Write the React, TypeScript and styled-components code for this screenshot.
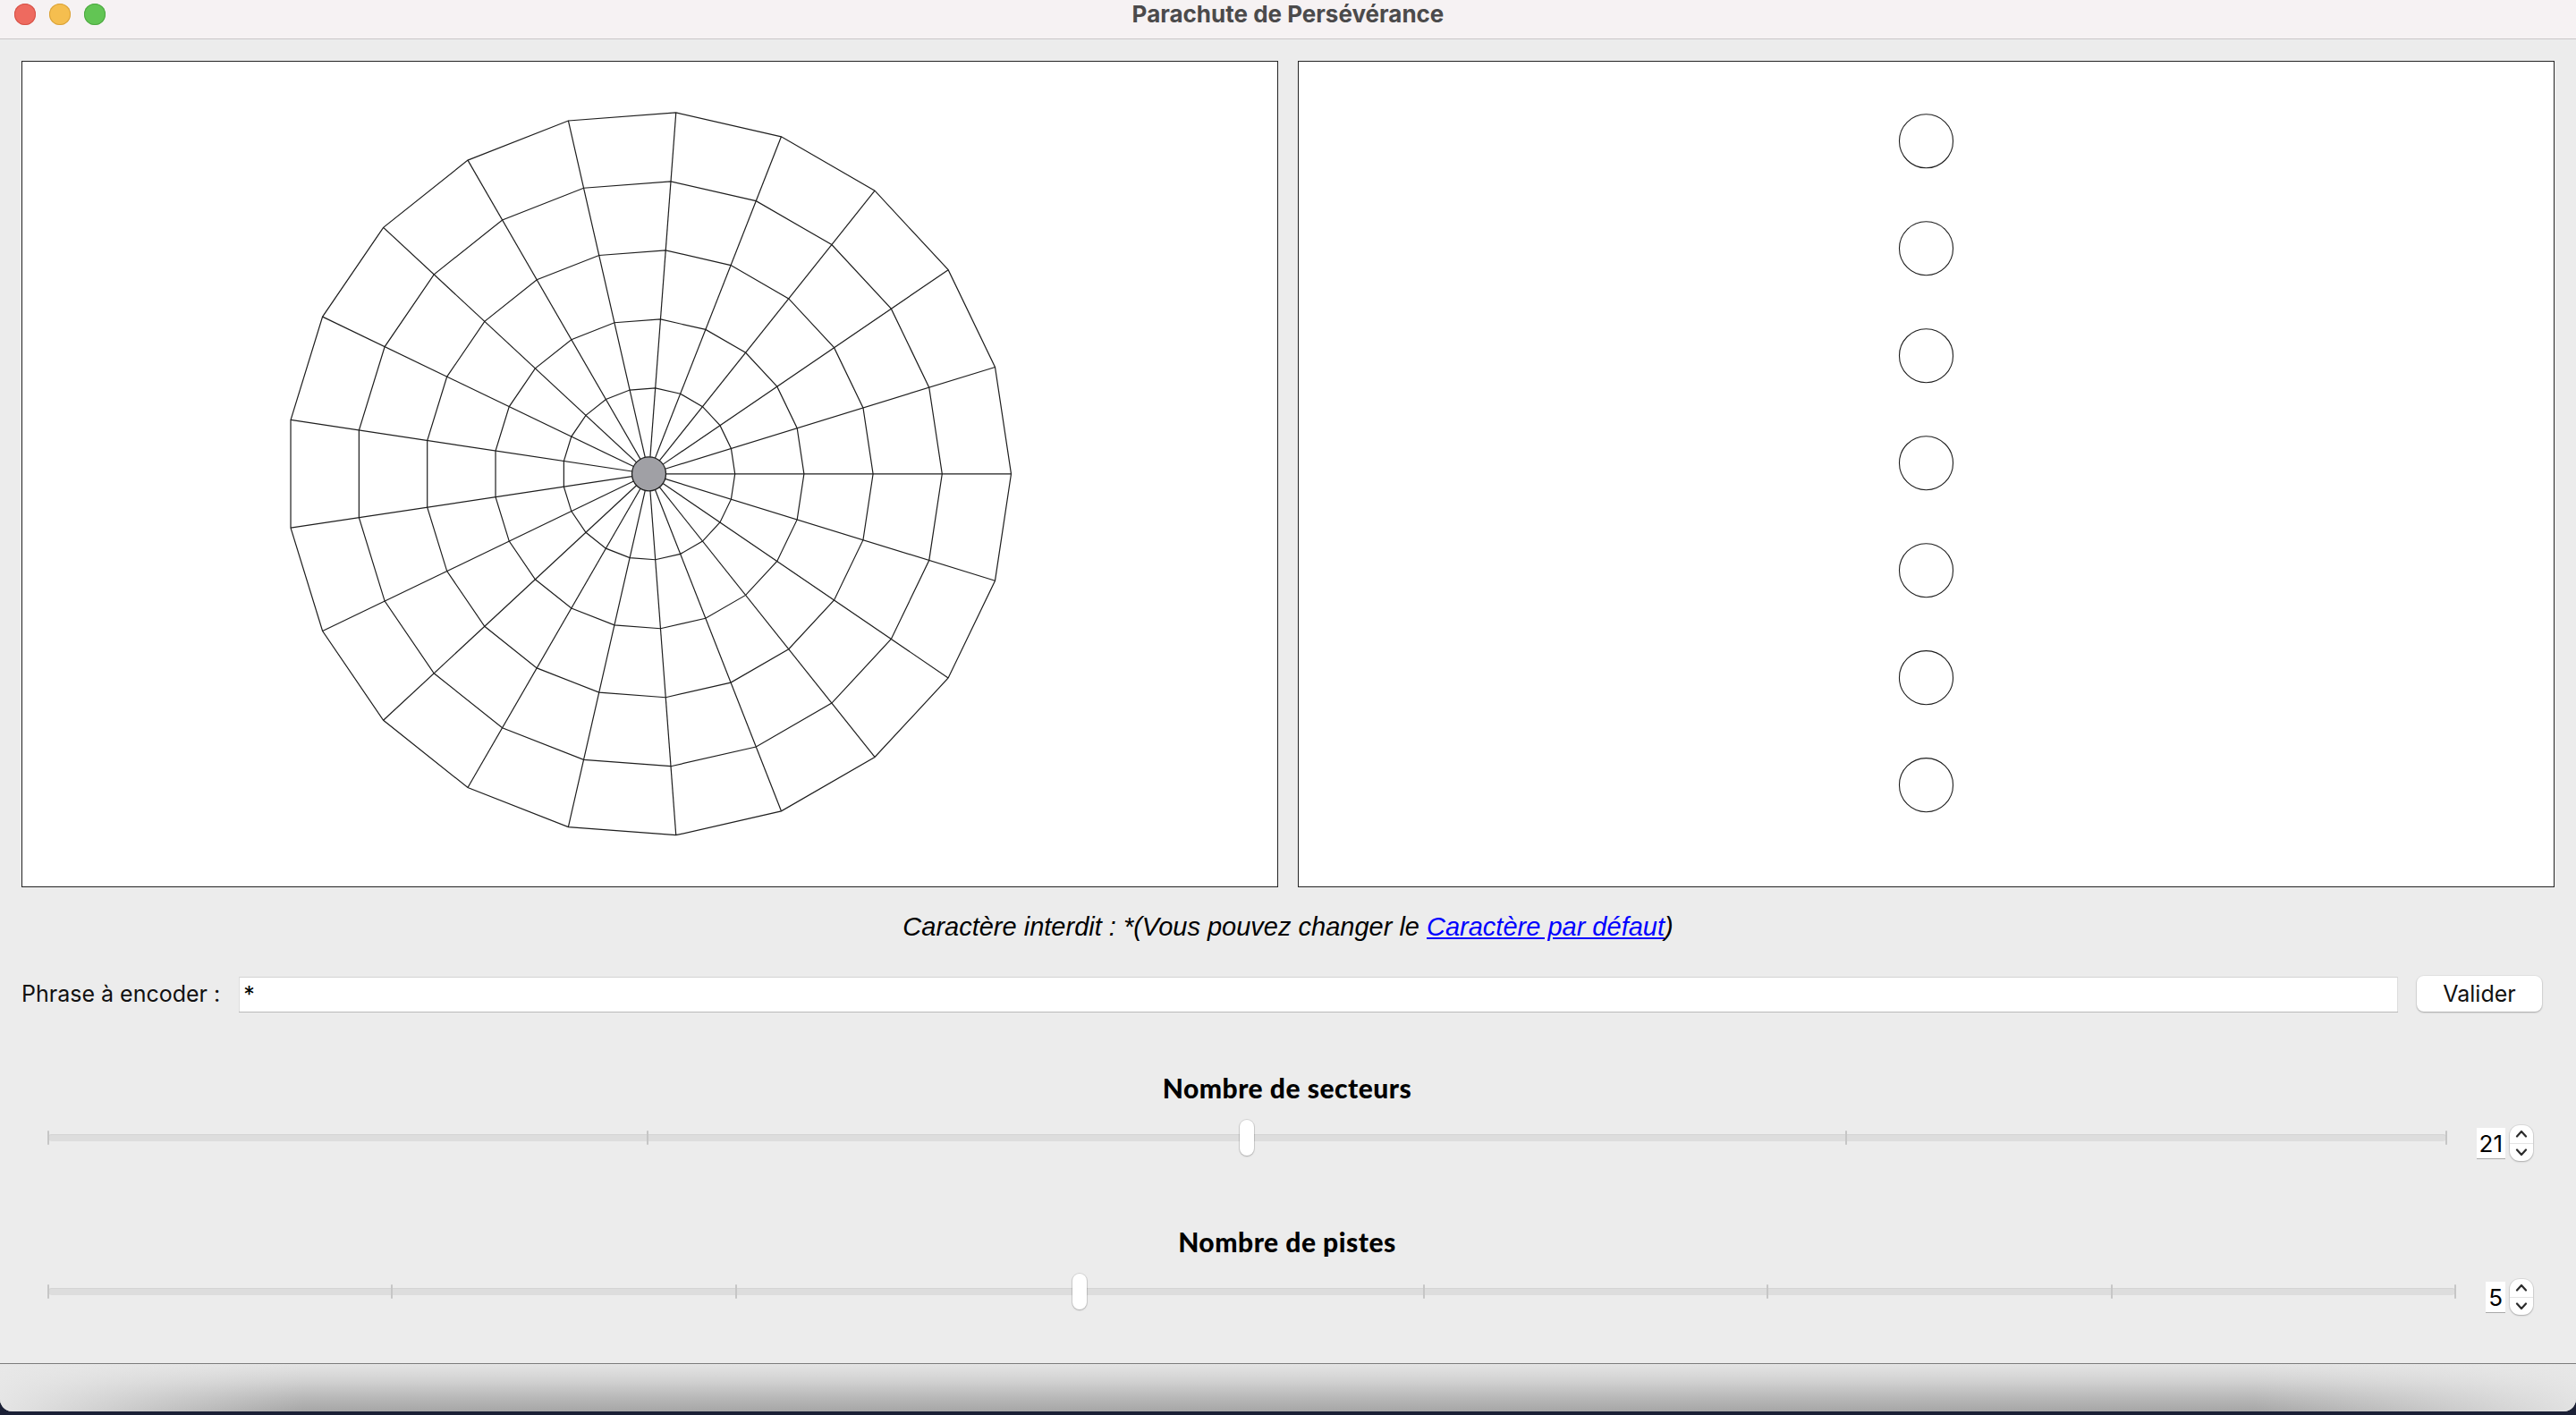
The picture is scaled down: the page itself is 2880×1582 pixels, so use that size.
import React from 'react';
import styled, { createGlobalStyle } from 'styled-components';

const GlobalStyle = createGlobalStyle`
  html, body {
    margin: 0;
    padding: 0;
    background: #1b2036;
  }
  * {
    box-sizing: border-box;
  }
`;

const SECTORS = 21;
const TRACKS = 5;
const HUB = 19;
const STEP = 77.2;

const Window = styled.div`
  width: 2880px;
  height: 1578px;
  background: #ececec;
  border-radius: 0 0 14px 14px;
  overflow: hidden;
  display: flex;
  flex-direction: column;
  font-family: Inter, 'Liberation Sans', sans-serif;
`;

const TitleBar = styled.header`
  height: 44px;
  flex: none;
  display: grid;
  grid-template-columns: 1fr auto 1fr;
  align-items: start;
  padding: 4px 16px 0;
  background: #f6f2f3;
  border-bottom: 1px solid #cac7c8;
`;

const Lights = styled.div`
  display: flex;
  gap: 15px;
`;

const Light = styled.span<{ $color: string; $edge: string }>`
  width: 24px;
  height: 24px;
  border-radius: 50%;
  background: ${(p) => p.$color};
  box-shadow: inset 0 0 0 1px ${(p) => p.$edge};
`;

const Title = styled.h1`
  margin: 0;
  font-size: 26px;
  line-height: 24px;
  font-weight: 700;
  color: #4b4a4b;
`;

const Main = styled.main`
  flex: 1;
  display: flex;
  flex-direction: column;
  padding: 24px 24px 0;
`;

const Panels = styled.section`
  display: grid;
  grid-template-columns: 1fr 1fr;
  gap: 22px;
  height: 923px;
`;

const Panel = styled.div`
  background: #fff;
  border: 1px solid #242424;
  svg {
    display: block;
    width: 100%;
    height: 100%;
  }
`;

const Notice = styled.p`
  margin: 30px 0 0;
  text-align: center;
  font-family: 'Liberation Sans', Arial, sans-serif;
  font-style: italic;
  font-size: 29px;
  line-height: 30px;
  color: #000;

  a {
    color: #0000ff;
    text-decoration: underline;
  }
`;

const FormRow = styled.div`
  margin-top: 40px;
  display: flex;
  align-items: center;
  gap: 21px;
  padding-right: 14px;
`;

const Label = styled.label`
  font-size: 25px;
  color: #111;
  white-space: nowrap;
`;

const TextInput = styled.input`
  flex: 1;
  height: 39px;
  padding: 0 4px;
  border: none;
  border-top: 1px solid #d2d2d2;
  border-left: 1px solid #dedede;
  border-right: 1px solid #dedede;
  box-shadow: 0 1px 0 #b9b9b9;
  background: #fff;
  font-family: Inter, sans-serif;
  font-size: 25px;
  color: #000;
  outline: none;
`;

const Button = styled.button`
  width: 140px;
  height: 40px;
  border: none;
  border-radius: 8px;
  background: #fff;
  box-shadow: 0 1px 2px rgba(0, 0, 0, 0.28), 0 0 0 1px rgba(0, 0, 0, 0.04);
  font-family: Inter, sans-serif;
  font-size: 25px;
  color: #111;
`;

const SliderBlock = styled.section<{ $top: number }>`
  margin-top: ${(p) => p.$top}px;
  padding: 0 24px 0 22px;
`;

const SliderTitle = styled.h2`
  margin: 0;
  text-align: center;
  font-family: Lato, 'Noto Sans', sans-serif;
  font-weight: 900;
  font-size: 30px;
  letter-spacing: 0.5px;
  line-height: 34px;
  color: #000;
`;

const SliderRow = styled.div`
  margin-top: 19px;
  display: flex;
  align-items: center;
  gap: 26px;
  height: 40px;
`;

const Slider = styled.div`
  flex: 1;
  height: 40px;
  position: relative;
`;

const Rail = styled.div`
  position: absolute;
  top: 0;
  bottom: 0;
  left: 8px;
  right: 8px;
`;

const Groove = styled.div`
  position: absolute;
  left: 0;
  right: 0;
  top: 16px;
  height: 8px;
  border-radius: 4px;
  background: #dddddd;
  box-shadow: inset 0 1px 0 #d4d4d4;
`;

const Tick = styled.span`
  position: absolute;
  top: 12px;
  width: 2px;
  height: 16px;
  margin-left: -1px;
  border-radius: 1px;
  background: #c6c6c6;
`;

const Handle = styled.span`
  position: absolute;
  top: 0;
  width: 16px;
  height: 40px;
  margin-left: -8px;
  border-radius: 8px;
  background: #fff;
  box-shadow: 0 0 0 1px rgba(0, 0, 0, 0.1), 0 1px 2px rgba(0, 0, 0, 0.2);
`;

const Spin = styled.div`
  display: flex;
  align-items: center;
  gap: 5px;
  margin-top: 12px;
`;

const SpinValue = styled.span`
  height: 35px;
  padding: 0 3px;
  background: #fff;
  border-bottom: 1px solid #a9a9a9;
  font-size: 26px;
  line-height: 35px;
  color: #000;
`;

const SpinArrows = styled.div`
  width: 26px;
  height: 40px;
  border-radius: 11px;
  background: #fff;
  box-shadow: 0 0 0 1px rgba(0, 0, 0, 0.07), 0 1px 2px rgba(0, 0, 0, 0.22);
  display: flex;
  flex-direction: column;

  span {
    flex: 1;
    display: flex;
    align-items: center;
    justify-content: center;
  }
  span + span {
    border-top: 1px solid #e4e4e4;
  }
`;

const Footer = styled.footer`
  height: 54px;
  flex: none;
  border-top: 1px solid #7c7c7c;
  background:
    linear-gradient(to right, rgba(232, 232, 232, 0.95) 0, rgba(232, 232, 232, 0) 340px,
      rgba(232, 232, 232, 0) 2520px, rgba(232, 232, 232, 0.9) 2880px),
    linear-gradient(to bottom, #e4e4e4 0, #d2d2d2 35%, #b9b9b9 70%, #a6a6a6 100%);
`;

const Web = () => {
  const cx = 700.5;
  const cy = 460.5;
  const outer = HUB + TRACKS * STEP;
  const angles = Array.from({ length: SECTORS }, (_, k) => (2 * Math.PI * k) / SECTORS);
  const rings = Array.from({ length: TRACKS }, (_, i) => HUB + (i + 1) * STEP);

  return (
    <svg viewBox="0 0 1403 921">
      <g stroke="#1e1e1e" strokeWidth="1.2" fill="none">
        {angles.map((a, k) => (
          <line
            key={k}
            x1={cx + HUB * Math.cos(a)}
            y1={cy - HUB * Math.sin(a)}
            x2={cx + outer * Math.cos(a)}
            y2={cy - outer * Math.sin(a)}
          />
        ))}
        {rings.map((r, i) => (
          <polygon
            key={i}
            points={angles.map((a) => `${cx + r * Math.cos(a)},${cy - r * Math.sin(a)}`).join(' ')}
          />
        ))}
      </g>
      <circle cx={cx} cy={cy} r={HUB} fill="#a0a0a5" stroke="#1e1e1e" strokeWidth="1.3" />
    </svg>
  );
};

const Beads = () => (
  <svg viewBox="0 0 1402 921">
    {Array.from({ length: 7 }, (_, i) => (
      <circle key={i} cx={701} cy={88.7 + i * 119.9} r={30} fill="none" stroke="#1e1e1e" strokeWidth="1.1" />
    ))}
  </svg>
);

const Chevron = ({ up }: { up?: boolean }) => (
  <svg width="14" height="9" viewBox="0 0 14 9">
    <polyline
      points={up ? '2,7.5 7,2 12,7.5' : '2,1.5 7,7 12,1.5'}
      fill="none"
      stroke="#2b2b2b"
      strokeWidth="2.2"
      strokeLinecap="round"
      strokeLinejoin="round"
    />
  </svg>
);

interface RangeProps {
  title: string;
  ticks: number;
  index: number;
  value: number;
  top: number;
}

const Range = ({ title, ticks, index, value, top }: RangeProps) => {
  const pct = (i: number) => `${(i / (ticks - 1)) * 100}%`;
  return (
    <SliderBlock $top={top}>
      <SliderTitle>{title}</SliderTitle>
      <SliderRow>
        <Slider>
          <Rail>
            <Groove />
            {Array.from({ length: ticks }, (_, i) => (
              <Tick key={i} style={{ left: pct(i) }} />
            ))}
            <Handle style={{ left: pct(index) }} />
          </Rail>
        </Slider>
        <Spin>
          <SpinValue>{value}</SpinValue>
          <SpinArrows>
            <span>
              <Chevron up />
            </span>
            <span>
              <Chevron />
            </span>
          </SpinArrows>
        </Spin>
      </SliderRow>
    </SliderBlock>
  );
};

export default function App() {
  return (
    <>
      <GlobalStyle />
      <Window>
        <TitleBar>
          <Lights>
            <Light $color="#ee6a5f" $edge="#d55247" />
            <Light $color="#f5be4f" $edge="#d9a23a" />
            <Light $color="#62c554" $edge="#4ea842" />
          </Lights>
          <Title>Parachute de Persévérance</Title>
        </TitleBar>

        <Main>
          <Panels>
            <Panel>
              <Web />
            </Panel>
            <Panel>
              <Beads />
            </Panel>
          </Panels>

          <Notice>
            Caractère interdit : *(Vous pouvez changer le <a href="#">Caractère par défaut</a>)
          </Notice>

          <FormRow>
            <Label htmlFor="phrase">Phrase à encoder :</Label>
            <TextInput id="phrase" defaultValue="*" />
            <Button>Valider</Button>
          </FormRow>

          <Range title="Nombre de secteurs" ticks={5} index={2} value={21} top={68} />
          <Range title="Nombre de pistes" ticks={8} index={3} value={5} top={79} />
        </Main>

        <Footer />
      </Window>
    </>
  );
}
